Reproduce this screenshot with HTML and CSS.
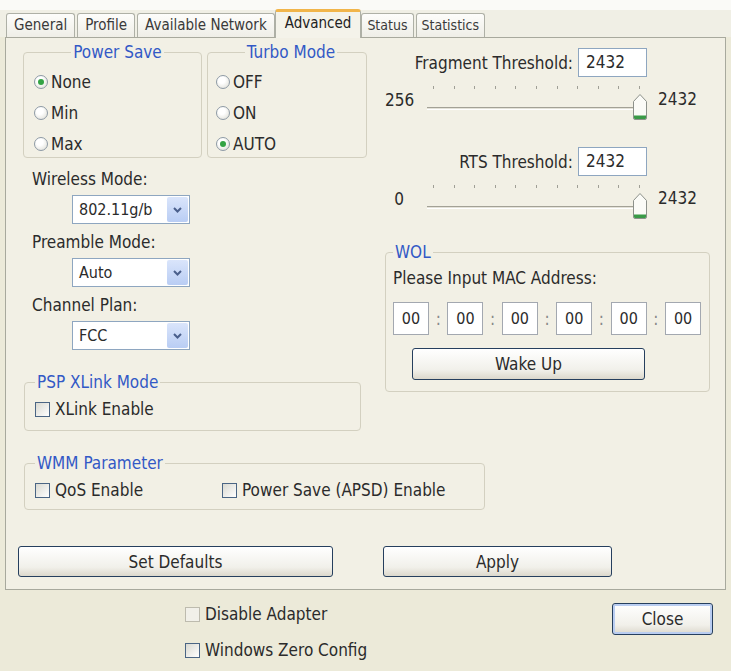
FILE: index.html
```html
<!DOCTYPE html>
<html lang="en">
<head>
  <meta charset="UTF-8">
  <title>Advanced</title>
  <link rel="stylesheet" href="styles.css">
</head>
<body>
<div class="dialog">

  <div class="tabs">
    <div class="tab">General</div>
    <div class="tab">Profile</div>
    <div class="tab">Available Network</div>
    <div class="tab active">Advanced</div>
    <div class="tab small">Status</div>
    <div class="tab small">Statistics</div>
  </div>

  <div class="panel">
    <div class="cols">

      <div class="left">
        <div class="modes">
          <fieldset class="group power">
            <legend class="center">Power Save</legend>
            <label class="radio"><i class="dot on"></i>None</label>
            <label class="radio"><i class="dot"></i>Min</label>
            <label class="radio"><i class="dot"></i>Max</label>
          </fieldset>
          <fieldset class="group turbo">
            <legend class="center">Turbo Mode</legend>
            <label class="radio"><i class="dot"></i>OFF</label>
            <label class="radio"><i class="dot"></i>ON</label>
            <label class="radio"><i class="dot on"></i>AUTO</label>
          </fieldset>
        </div>

        <div class="field first">
          <div class="label">Wireless Mode:</div>
          <div class="select"><span>802.11g/b</span><i class="drop"><svg width="9" height="6" viewBox="0 0 9 6"><path d="M1 1l3.5 3.5L8 1" fill="none" stroke="#4a5f8c" stroke-width="2"/></svg></i></div>
        </div>
        <div class="field">
          <div class="label">Preamble Mode:</div>
          <div class="select"><span>Auto</span><i class="drop"><svg width="9" height="6" viewBox="0 0 9 6"><path d="M1 1l3.5 3.5L8 1" fill="none" stroke="#4a5f8c" stroke-width="2"/></svg></i></div>
        </div>
        <div class="field">
          <div class="label">Channel Plan:</div>
          <div class="select"><span>FCC</span><i class="drop"><svg width="9" height="6" viewBox="0 0 9 6"><path d="M1 1l3.5 3.5L8 1" fill="none" stroke="#4a5f8c" stroke-width="2"/></svg></i></div>
        </div>

        <fieldset class="group psp">
          <legend>PSP XLink Mode</legend>
          <label class="check"><i class="box"></i>XLink Enable</label>
        </fieldset>
      </div>

      <div class="right">
        <div class="thresh">
          <span>Fragment Threshold:</span>
          <div class="input">2432</div>
        </div>
        <div class="slider-row">
          <span class="min">256</span>
          <div class="slider">
            <div class="ticks"><i></i><i></i><i></i><i></i><i></i><i></i><i></i><i></i><i></i><i></i><i></i></div>
            <div class="track"></div>
            <svg class="thumb" width="16" height="28" viewBox="0 0 16 28"><path d="M1.5 25V8.5L8 1.5l6.5 7V25q0 1.5-1.5 1.5H3q-1.5 0-1.5-1.5z" fill="#fbfbf7" stroke="#8d918b"/><path d="M2 22.5h12V25q0 1-1 1H3q-1 0-1-1z" fill="#3a9a47"/></svg>
          </div>
          <span class="max">2432</span>
        </div>

        <div class="thresh rts">
          <span>RTS Threshold:</span>
          <div class="input">2432</div>
        </div>
        <div class="slider-row">
          <span class="min">0</span>
          <div class="slider">
            <div class="ticks"><i></i><i></i><i></i><i></i><i></i><i></i><i></i><i></i><i></i><i></i><i></i></div>
            <div class="track"></div>
            <svg class="thumb" width="16" height="28" viewBox="0 0 16 28"><path d="M1.5 25V8.5L8 1.5l6.5 7V25q0 1.5-1.5 1.5H3q-1.5 0-1.5-1.5z" fill="#fbfbf7" stroke="#8d918b"/><path d="M2 22.5h12V25q0 1-1 1H3q-1 0-1-1z" fill="#3a9a47"/></svg>
          </div>
          <span class="max">2432</span>
        </div>

        <fieldset class="group wol">
          <legend>WOL</legend>
          <div>Please Input MAC Address:</div>
          <div class="mac">
            <div class="octet">00</div><span>:</span>
            <div class="octet">00</div><span>:</span>
            <div class="octet">00</div><span>:</span>
            <div class="octet">00</div><span>:</span>
            <div class="octet">00</div><span>:</span>
            <div class="octet">00</div>
          </div>
          <button class="btn wake">Wake Up</button>
        </fieldset>
      </div>
    </div>

    <fieldset class="group wmm">
      <legend>WMM Parameter</legend>
      <div class="wmm-row">
        <label class="check qos"><i class="box"></i>QoS Enable</label>
        <label class="check"><i class="box"></i>Power Save (APSD) Enable</label>
      </div>
    </fieldset>

    <div class="actions">
      <button class="btn defaults">Set Defaults</button>
      <button class="btn apply">Apply</button>
    </div>
  </div>

  <div class="footer">
    <div class="options">
      <label class="check"><i class="box off"></i>Disable Adapter</label>
      <label class="check"><i class="box"></i>Windows Zero Config</label>
    </div>
    <button class="btn close">Close</button>
  </div>

</div>
</body>
</html>
```

FILE: styles.css
```css
* {
  box-sizing: border-box;
}
body {
  margin: 0;
  background: #fafaf7;
  font-family: "DejaVu Sans Condensed", "DejaVu Sans", sans-serif;
  font-stretch: condensed;
  font-size: 17px;
  line-height: 20px;
  color: #2b2b2b;
}
.dialog {
  width: 731px;
  height: 661px;
  margin-top: 10px;
  background: #ecead9;
  display: flex;
  flex-direction: column;
}

/* tabs */
.tabs {
  display: flex;
  align-items: flex-end;
  height: 27px;
  padding-left: 6px;
  background: #f0efe5;
}
.tab {
  height: 24px;
  padding: 0 7px;
  margin-right: 2px;
  border: 1px solid #aeb0a6;
  border-bottom: none;
  border-radius: 3px 3px 0 0;
  background: linear-gradient(#fdfdfb, #efeee7);
  font-size: 15px;
  line-height: 22px;
  color: #3a3a3a;
}
.tab.small {
  padding: 0 5px;
  font-size: 14px;
}
.tab.active {
  position: relative;
  z-index: 1;
  height: 29px;
  margin: 0 0 -1px -2px;
  padding: 0 9px;
  border-top: 3px solid #f1b54a;
  background: #f4f3ea;
  line-height: 23px;
  color: #222;
}

/* panel */
.panel {
  height: 553px;
  margin: 0 5px;
  padding: 4px 0 0 12px;
  border: 1px solid #a8a99d;
  background: #f2f0e5;
}
.cols {
  display: flex;
  gap: 18px;
  padding-left: 5px;
}
.left {
  width: 344px;
}
.right {
  width: 326px;
}

fieldset.group {
  margin: 0;
  padding: 0;
  min-width: 0;
  border: 1px solid #d3d0c0;
  border-radius: 4px;
}
.group legend {
  padding: 0 2px;
  color: #3259c6;
}
.group legend.center {
  margin: 0 auto;
}

/* power / turbo */
.modes {
  display: flex;
  gap: 5px;
}
.power,
.turbo {
  height: 116px;
  display: flex;
  flex-direction: column;
  gap: 11px;
}
fieldset.power {
  width: 179px;
  padding: 10px 0 0 10px;
}
fieldset.turbo {
  width: 160px;
  padding: 10px 0 0 8px;
}
.radio,
.check {
  display: flex;
  align-items: center;
  height: 20px;
}
.dot {
  width: 14px;
  height: 14px;
  margin-right: 3px;
  border: 1px solid #8e9aa6;
  border-radius: 50%;
  background: radial-gradient(circle at 40% 35%, #ffffff 30%, #dadad1);
  position: relative;
}
.dot.on::after {
  content: "";
  position: absolute;
  left: 3px;
  top: 3px;
  width: 6px;
  height: 6px;
  border-radius: 50%;
  background: #33a344;
}
.box {
  width: 15px;
  height: 15px;
  margin-right: 5px;
  border: 1px solid #4a6584;
  background: linear-gradient(135deg, #d9d9d1, #ffffff);
}
.box.off {
  border-color: #bdbbae;
  background: #f1f0e9;
}

/* combos */
.field {
  margin-top: 12px;
}
.field.first {
  margin-top: 11px;
}
.field + .field {
  margin-top: 8px;
}
.label {
  padding-left: 9px;
}
.select {
  display: flex;
  align-items: center;
  width: 118px;
  height: 29px;
  margin: 6px 0 0 49px;
  padding: 1px;
  border: 1px solid #8ea6c0;
  background: #fff;
  font-size: 16px;
}
.select span {
  flex: 1;
  padding-left: 5px;
}
.drop {
  width: 21px;
  height: 100%;
  display: flex;
  align-items: center;
  justify-content: center;
  border-radius: 2px;
  background: linear-gradient(#dae5fb, #b9cdf4);
}

/* psp */
fieldset.psp {
  width: 337px;
  height: 59px;
  margin: 22px 0 0 1px;
  padding: 7px 10px 0 10px;
}

/* thresholds */
.thresh {
  display: flex;
  justify-content: flex-end;
  align-items: center;
  gap: 5px;
  margin-top: 6px;
  padding-right: 64px;
}
.thresh.rts {
  margin-top: 25px;
}
.input {
  width: 69px;
  height: 29px;
  padding: 3px 0 0 7px;
  border: 1px solid #8ea6c0;
  background: #fff;
}
.slider-row {
  display: flex;
  align-items: flex-start;
  height: 37px;
  margin-top: 8px;
}
.min {
  width: 28px;
  margin-top: 5px;
  text-align: center;
}
.max {
  margin: 4px 0 0 8px;
}
.slider {
  position: relative;
  width: 227px;
  height: 37px;
  margin-left: 10px;
}
.ticks {
  display: flex;
  justify-content: space-between;
  height: 3px;
  margin: 1px 10px 0 10px;
}
.ticks i {
  width: 1px;
  height: 3px;
  background: #a09f96;
}
.track {
  width: 213px;
  height: 3px;
  margin: 18px 0 0 4px;
  border-top: 1px solid #a3a196;
  border-bottom: 1px solid #ffffff;
  background: #e4e2d8;
}
.thumb {
  position: absolute;
  left: 209px;
  top: 8px;
}

/* wol */
fieldset.wol {
  width: 325px;
  height: 150px;
  margin-top: 21px;
  padding: 6px 8px 0 7px;
}
.mac {
  display: flex;
  align-items: center;
  margin-top: 14px;
}
.mac span {
  flex: 1;
  text-align: center;
  color: #888;
}
.octet {
  width: 36px;
  height: 33px;
  padding-top: 6px;
  border: 1px solid #a3a8b0;
  background: #fff;
  text-align: center;
  font-size: 16px;
}

/* buttons */
.btn {
  height: 32px;
  border: 1px solid #263f5e;
  border-radius: 3px;
  background: linear-gradient(#ffffff, #f1f0ea 70%, #dcd8cc);
  font-family: inherit;
  font-stretch: condensed;
  font-size: 17px;
  color: #2b2b2b;
}
.wake {
  display: block;
  width: 233px;
  margin: 13px 0 0 19px;
}

/* wmm */
fieldset.wmm {
  width: 461px;
  height: 57px;
  margin: 22px 0 0 6px;
  padding: 7px 10px 0 10px;
}
.wmm-row {
  display: flex;
}
.qos {
  width: 187px;
}

.actions {
  display: flex;
  gap: 50px;
  margin-top: 36px;
}
.defaults {
  width: 315px;
  height: 31px;
}
.apply {
  width: 229px;
  height: 31px;
}

/* footer */
.footer {
  flex: 1;
  display: flex;
  justify-content: space-between;
  align-items: flex-start;
  padding: 13px 18px 0 185px;
}
.options {
  display: flex;
  flex-direction: column;
  gap: 16px;
  padding-top: 1px;
}
.close {
  width: 101px;
  box-shadow: inset 0 0 0 2px #b9cdf1;
}
```
